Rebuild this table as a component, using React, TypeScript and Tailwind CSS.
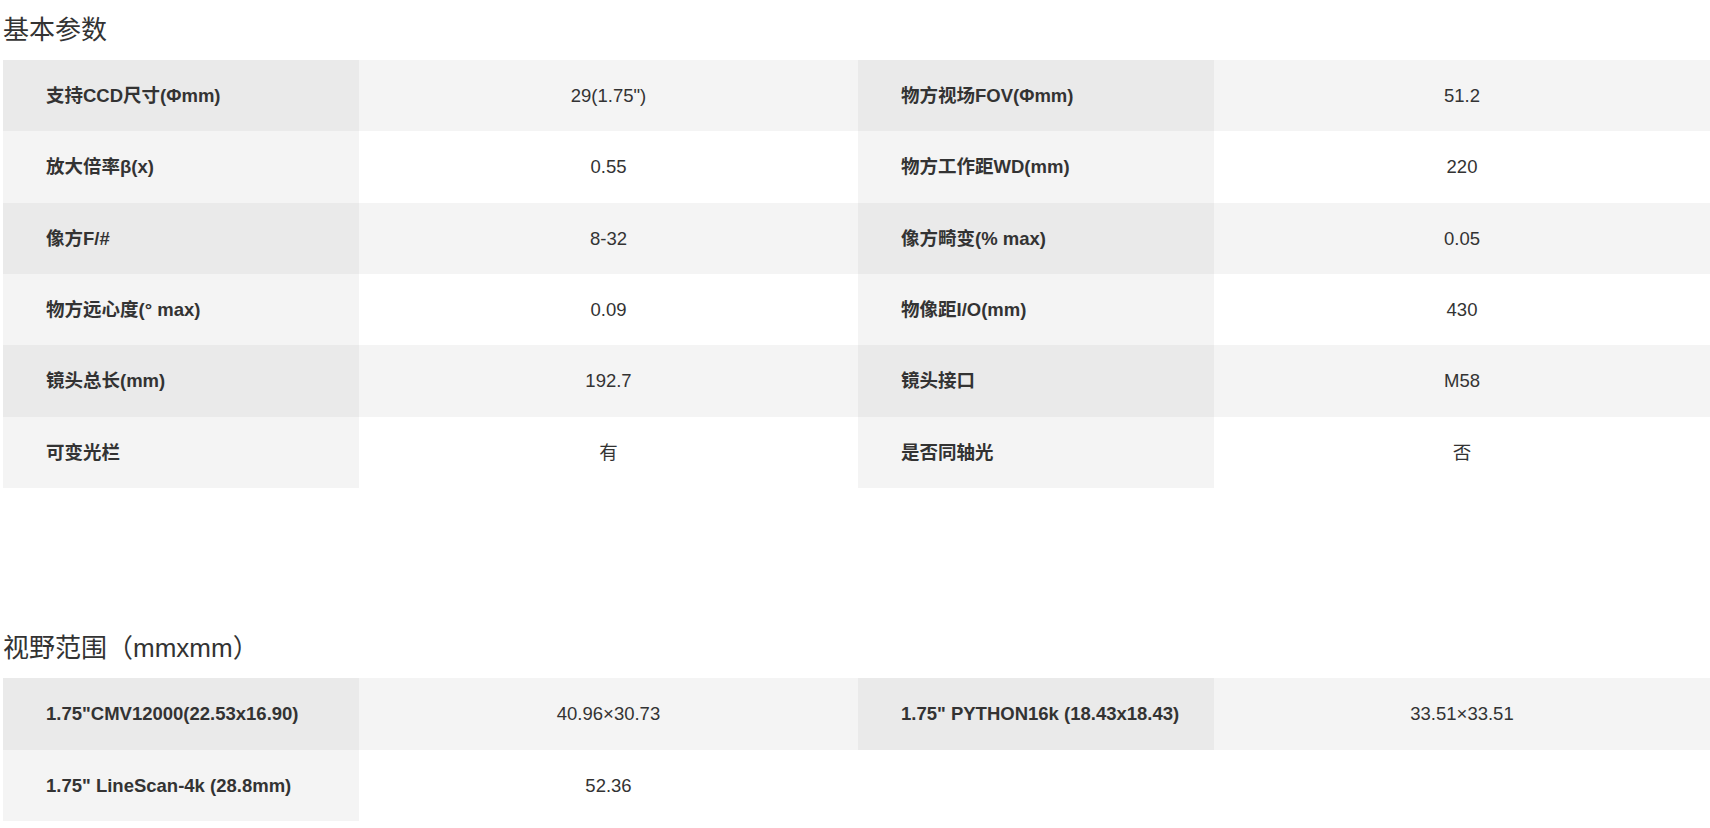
import React from "react";

const FONT = { fontFamily: '"Liberation Sans", Arial, "Noto Sans CJK SC", sans-serif' };

type Cell = { label?: string; value?: string };

function Row({ cells, odd, h }: { cells: Cell[]; odd: boolean; h: string }) {
  const labelBg = odd ? "bg-[#eaeaea]" : "bg-[#f4f4f4]";
  const valueBg = odd ? "bg-[#f4f4f4]" : "bg-white";
  return (
    <div className={`grid grid-cols-[356px_499px_356px_1fr] ${h}`}>
      {[0, 1].map((i) => {
        const c = cells[i];
        if (!c) {
          return (
            <React.Fragment key={i}>
              <div className="bg-white" />
              <div className="bg-white" />
            </React.Fragment>
          );
        }
        return (
          <React.Fragment key={i}>
            <div className={`${labelBg} flex items-center pl-[43px] font-bold text-[18.5px] text-[#333]`}>
              {c.label}
            </div>
            <div className={`${valueBg} flex items-center justify-center text-[18.5px] text-[#333]`}>
              {c.value}
            </div>
          </React.Fragment>
        );
      })}
    </div>
  );
}

export default function App() {
  const basic: Cell[][] = [
    [
      { label: "支持CCD尺寸(Φmm)", value: '29(1.75")' },
      { label: "物方视场FOV(Φmm)", value: "51.2" },
    ],
    [
      { label: "放大倍率β(x)", value: "0.55" },
      { label: "物方工作距WD(mm)", value: "220" },
    ],
    [
      { label: "像方F/#", value: "8-32" },
      { label: "像方畸变(% max)", value: "0.05" },
    ],
    [
      { label: "物方远心度(° max)", value: "0.09" },
      { label: "物像距I/O(mm)", value: "430" },
    ],
    [
      { label: "镜头总长(mm)", value: "192.7" },
      { label: "镜头接口", value: "M58" },
    ],
    [
      { label: "可变光栏", value: "有" },
      { label: "是否同轴光", value: "否" },
    ],
  ];
  const heights = ["h-[71px]", "h-[72px]", "h-[71px]", "h-[71px]", "h-[72px]", "h-[71px]"];

  return (
    <div className="w-[1710px] h-[828px] bg-white overflow-hidden" style={FONT}>
      <div className="h-[60px] flex items-center pl-[3px] text-[26px] text-[#333]">基本参数</div>
      <div className="ml-[3px]">
        {basic.map((r, i) => (
          <Row key={i} cells={r} odd={i % 2 === 0} h={heights[i]} />
        ))}
      </div>
      <div className="h-[131px]" />
      <div className="h-[59px] flex items-center pl-[3px] text-[26px] text-[#333]">视野范围（mmxmm）</div>
      <div className="ml-[3px]">
        <Row
          odd
          h="h-[72px]"
          cells={[
            { label: '1.75"CMV12000(22.53x16.90)', value: "40.96×30.73" },
            { label: '1.75" PYTHON16k (18.43x18.43)', value: "33.51×33.51" },
          ]}
        />
        <Row odd={false} h="h-[71px]" cells={[{ label: '1.75" LineScan-4k (28.8mm)', value: "52.36" }]} />
      </div>
    </div>
  );
}
